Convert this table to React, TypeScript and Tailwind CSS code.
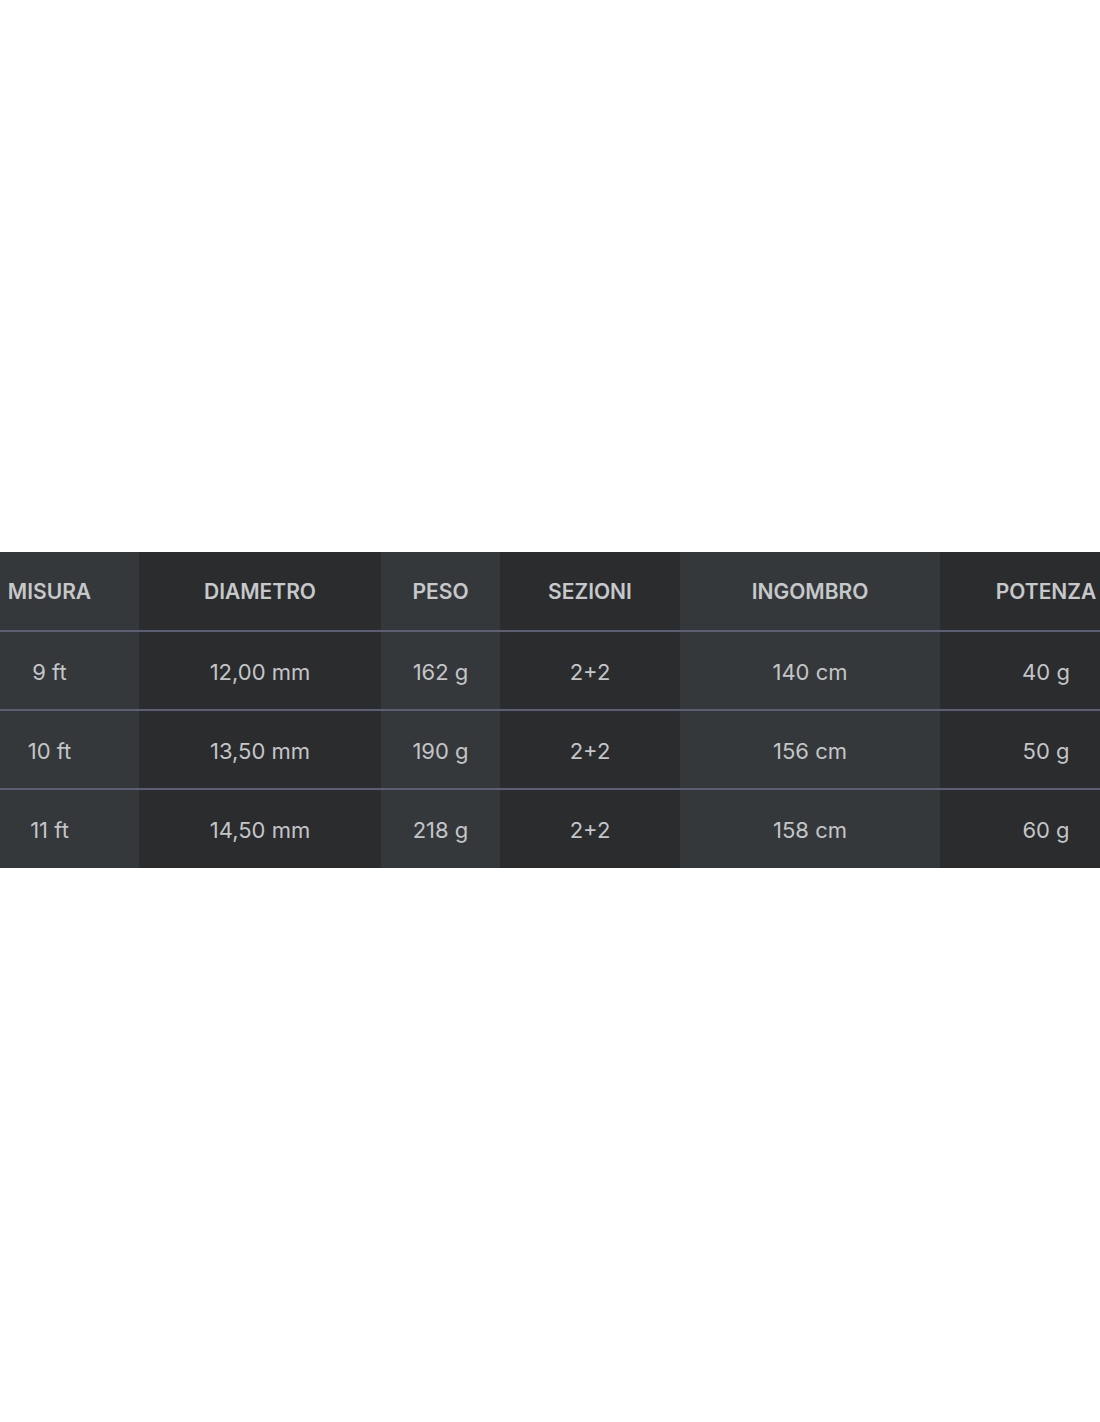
import React from "react";

const columns = [
  { label: "MISURA", width: "w-[179px]" },
  { label: "DIAMETRO", width: "w-[242px]" },
  { label: "PESO", width: "w-[119px]" },
  { label: "SEZIONI", width: "w-[180px]" },
  { label: "INGOMBRO", width: "w-[260px]" },
  { label: "POTENZA", width: "w-[212px]" },
];

const rows = [
  ["9 ft", "12,00 mm", "162 g", "2+2", "140 cm", "40 g"],
  ["10 ft", "13,50 mm", "190 g", "2+2", "156 cm", "50 g"],
  ["11 ft", "14,50 mm", "218 g", "2+2", "158 cm", "60 g"],
];

export default function App() {
  return (
    <div className="min-h-[1422px] bg-white pt-[552px] overflow-hidden font-['Inter',sans-serif]">
      <div className="ml-[-40px] w-[1192px] bg-[#2a2c2e]">
        {/* header */}
        <div className="flex h-[80px] border-b-2 border-[#5c5e78]">
          {columns.map((c, i) => (
            <div
              key={c.label}
              className={`${c.width} flex items-center justify-center pt-[2px] text-[21px] font-semibold text-[#c6c8ca] ${
                i % 2 === 0 ? "bg-[#35383b]" : "bg-[#2a2c2e]"
              }`}
            >
              {c.label}
            </div>
          ))}
        </div>

        {/* body */}
        {rows.map((r, ri) => (
          <div
            key={ri}
            className={`flex ${ri < rows.length - 1 ? "h-[79px] border-b-2 border-[#5c5e78]" : "h-[78px]"}`}
          >
            {r.map((cell, i) => (
              <div
                key={i}
                className={`${columns[i].width} flex items-center justify-center pt-[3px] text-[22px] text-[#c3c5c7] ${
                  i % 2 === 0 ? "bg-[#35383b]" : "bg-[#2a2c2e]"
                }`}
              >
                {cell}
              </div>
            ))}
          </div>
        ))}
      </div>
    </div>
  );
}
